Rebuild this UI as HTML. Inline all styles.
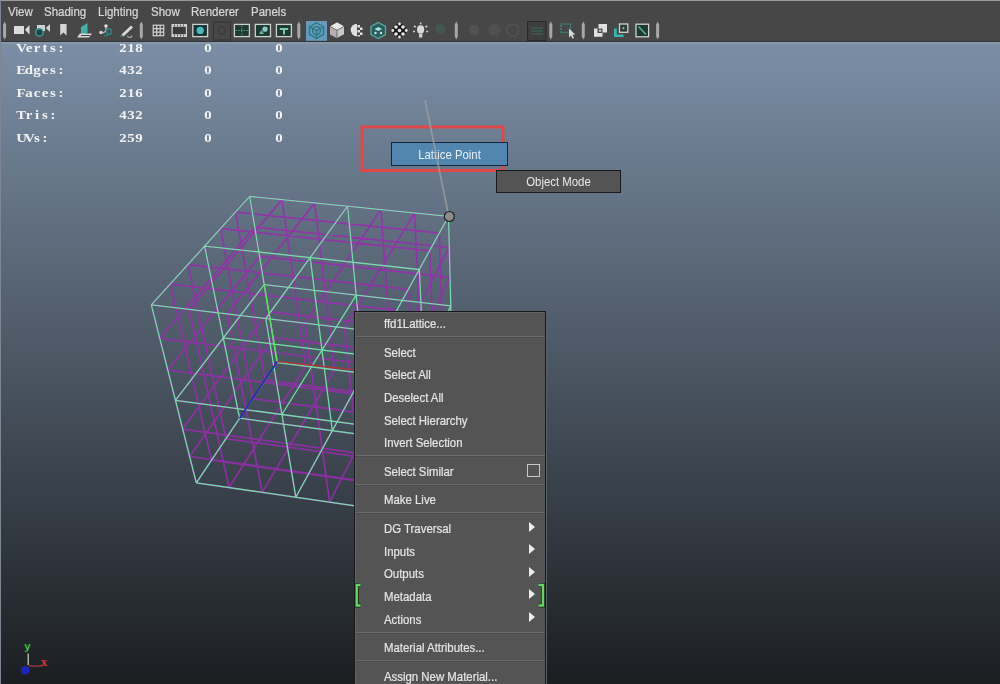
<!DOCTYPE html>
<html><head><meta charset="utf-8">
<style>
*{margin:0;padding:0;box-sizing:border-box}
html,body{width:1000px;height:684px;overflow:hidden;background:#444}
body{position:relative;font-family:"Liberation Sans",sans-serif}
#topbar{position:absolute;left:0;top:0;width:1000px;height:42px;background:#464746;border-top:1px solid #9a9a9a;border-bottom:1px solid #30363a}
#leftline{position:absolute;left:0;top:0;width:1px;height:684px;background:#7e8694;z-index:5}
#menus{position:absolute;top:5px;left:0;height:14px;color:#d8d8d8;-webkit-text-stroke:0.2px #d8d8d8;font-size:11.5px;z-index:4;line-height:14px}
#menus span{position:absolute;top:0;white-space:nowrap;transform:scaleY(1.16);transform-origin:0 11px}
#vp{position:absolute;left:1px;top:42px;width:999px;height:642px;border-top:2px solid #8898a8;
 background:linear-gradient(to bottom,#7b8ea5 0px,#1b1e21 641px)}
#stats{position:absolute;left:0;top:0;font-family:"Liberation Serif",serif;font-weight:bold;font-size:12.6px;color:#f2f2f2;line-height:14px}
#stats span{position:absolute;width:8px;text-align:center;white-space:nowrap;transform:scaleX(1.18)}
svg{position:absolute;left:0;top:0}
.menu{position:absolute;left:354px;top:311px;width:192px;height:380px;background:#545454;border:1px solid #16181c;box-shadow:inset 1px 1px 0 #646464,1px 0 0 #586068}
.mi{position:absolute;left:29px;color:#e4e4e4;-webkit-text-stroke:0.2px #e4e4e4;font-size:11.4px;white-space:nowrap;line-height:13px;transform:scaleY(1.14);transform-origin:0 11px}
.sep{position:absolute;left:0;width:190px;height:2px;background:#6c6c6c;border-bottom:1px solid #4c4c4c}
.arr{position:absolute;left:173.5px;width:0;height:0;border-top:5.5px solid transparent;border-bottom:5.5px solid transparent;border-left:6px solid #ececec}
</style></head><body>
<div id="vp"></div>
<svg width="1000" height="684" viewBox="0 0 1000 684">
<defs><filter id="bl" x="-5%" y="-5%" width="110%" height="110%"><feGaussianBlur stdDeviation="0.5"/></filter>
<filter id="bm" x="-5%" y="-5%" width="110%" height="110%"><feGaussianBlur stdDeviation="0.6"/></filter></defs>
<g filter="url(#bm)"><path d="M277.0 362.5L249.7 196.4M277.0 362.5L196.3 482.8M277.0 362.5L452.8 384.6M277.0 362.5L196.3 482.8M277.0 362.5L452.8 384.6M277.0 362.5L249.7 196.4M265.1 380.2L235.5 212.1M272.9 337.6L189.7 456.5M265.1 380.2L444.8 403.3M305.7 366.1L229.1 487.5M272.9 337.6L452.2 359.4M305.7 366.1L282.0 199.6M252.7 398.7L220.5 228.6M268.6 311.6L182.7 429.1M252.7 398.7L436.4 422.9M334.6 369.7L262.3 492.4M268.6 311.6L451.5 333.2M334.6 369.7L314.6 202.9M239.6 418.2L204.6 246.1M264.2 284.6L175.4 400.3M239.6 418.2L427.6 443.5M363.7 373.4L295.8 497.2M264.2 284.6L450.8 305.8M363.7 373.4L347.6 206.2M225.9 438.6L187.9 264.6M259.6 256.4L167.8 370.0M225.9 438.6L418.4 465.2M393.2 377.1L329.6 502.2M259.6 256.4L450.1 277.3M393.2 377.1L380.9 209.6M211.5 460.1L170.2 284.1M254.7 227.1L159.8 338.3M211.5 460.1L408.7 488.1M422.9 380.8L363.8 507.2M254.7 227.1L449.3 247.5M422.9 380.8L414.5 213.0M196.3 482.8L151.3 304.9M249.7 196.4L151.3 304.9M196.3 482.8L398.4 512.2M452.8 384.6L398.4 512.2M249.7 196.4L448.5 216.4M452.8 384.6L448.5 216.4M452.8 384.6L448.5 216.4M452.8 384.6L398.4 512.2M249.7 196.4L448.5 216.4M249.7 196.4L151.3 304.9M196.3 482.8L398.4 512.2M196.3 482.8L151.3 304.9M444.8 403.3L439.3 233.1M452.2 359.4L396.3 485.8M235.5 212.1L439.3 233.1M282.0 199.6L189.1 309.4M189.7 456.5L396.3 485.8M229.1 487.5L189.1 309.4M436.4 422.9L429.6 250.8M451.5 333.2L394.2 458.2M220.5 228.6L429.6 250.8M314.6 202.9L227.2 313.9M182.7 429.1L394.2 458.2M262.3 492.4L227.2 313.9M427.6 443.5L419.3 269.5M450.8 305.8L391.9 429.1M204.6 246.1L419.3 269.5M347.6 206.2L265.8 318.5M175.4 400.3L391.9 429.1M295.8 497.2L265.8 318.5M418.4 465.2L408.4 289.3M450.1 277.3L389.6 398.6M187.9 264.6L408.4 289.3M380.9 209.6L304.9 323.2M167.8 370.0L389.6 398.6M329.6 502.2L304.9 323.2M408.7 488.1L396.8 310.3M449.3 247.5L387.1 366.5M170.2 284.1L396.8 310.3M414.5 213.0L344.4 327.9M159.8 338.3L387.1 366.5M363.8 507.2L344.4 327.9M398.4 512.2L384.5 332.6M448.5 216.4L384.5 332.6M151.3 304.9L384.5 332.6M448.5 216.4L384.5 332.6M151.3 304.9L384.5 332.6M398.4 512.2L384.5 332.6" stroke="#9a2cb0" stroke-width="1.7" fill="none" opacity="0.85"/></g>
<g filter="url(#bl)">
<path d="M277.0 362.5L452.8 384.6M277.0 362.5L249.7 196.4M277.0 362.5L196.3 482.8M239.6 418.2L427.6 443.5M239.6 418.2L204.6 246.1M264.2 284.6L175.4 400.3M196.3 482.8L398.4 512.2M196.3 482.8L151.3 304.9M249.7 196.4L151.3 304.9M264.2 284.6L450.8 305.8M363.7 373.4L347.6 206.2M363.7 373.4L295.8 497.2M223.3 337.9L423.7 362.5M332.3 430.7L310.2 257.6M356.2 295.1L281.9 414.5M175.4 400.3L391.9 429.1M295.8 497.2L265.8 318.5M347.6 206.2L265.8 318.5M249.7 196.4L448.5 216.4M452.8 384.6L448.5 216.4M452.8 384.6L398.4 512.2M204.6 246.1L419.3 269.5M427.6 443.5L419.3 269.5M450.8 305.8L391.9 429.1M151.3 304.9L384.5 332.6M398.4 512.2L384.5 332.6M448.5 216.4L384.5 332.6" stroke="#72dea4" stroke-width="1.3" fill="none"/>
<path d="M277.3 361.5L264.2 284.6" stroke="#58e058" stroke-width="1.4"/>
<path d="M277.3 361.5L354 369.8" stroke="#a83838" stroke-width="1.5"/>
<path d="M277.3 361.5L239.6 418.2" stroke="#1c28b0" stroke-width="1.6"/>
</g>
<rect x="362" y="127" width="141" height="43.5" fill="none" stroke="#e04848" stroke-width="3"/>
<!-- gizmo -->
<path d="M28.2 653.5V665" stroke="#c8d8c8" stroke-width="1.2"/>
<path d="M28.5 665.5Q36 667 43 665.5" stroke="#8a3a3a" stroke-width="1.5" fill="none"/>
<circle cx="25.2" cy="670.2" r="4.2" fill="#1c24c0"/>
<text x="24.2" y="649.5" font-family="Liberation Sans" font-weight="bold" font-size="11.5" fill="#58e058" stroke="#0a300a" stroke-width="0.3">y</text>
<text x="41" y="666" font-family="Liberation Serif" font-weight="bold" font-size="12" fill="#e03434">x</text>
</svg>
<div id="topbar"></div>
<svg width="1000" height="42" viewBox="0 0 1000 42" style="position:absolute;left:0;top:0;z-index:3">

<path transform="translate(2.8 21.5)" d="M1.8 0L3.3 3L3.3 15L1.8 18L0.3 15L0.3 3Z" fill="#a8a8a8"/>
<path transform="translate(139.5 21.5)" d="M1.8 0L3.3 3L3.3 15L1.8 18L0.3 15L0.3 3Z" fill="#a8a8a8"/>
<path transform="translate(297.0 21.5)" d="M1.8 0L3.3 3L3.3 15L1.8 18L0.3 15L0.3 3Z" fill="#a8a8a8"/>
<path transform="translate(454.5 21.5)" d="M1.8 0L3.3 3L3.3 15L1.8 18L0.3 15L0.3 3Z" fill="#a8a8a8"/>
<path transform="translate(549.0 21.5)" d="M1.8 0L3.3 3L3.3 15L1.8 18L0.3 15L0.3 3Z" fill="#a8a8a8"/>
<path transform="translate(581.5 21.5)" d="M1.8 0L3.3 3L3.3 15L1.8 18L0.3 15L0.3 3Z" fill="#a8a8a8"/>
<path transform="translate(655.8 21.5)" d="M1.8 0L3.3 3L3.3 15L1.8 18L0.3 15L0.3 3Z" fill="#a8a8a8"/>
<!-- camera -->
<rect x="14" y="26" width="10" height="8" fill="#dcdcdc"/>
<path d="M25 29.7L29.5 25L29.5 34.5Z" fill="#dcdcdc"/>
<!-- camera 2 -->
<rect x="37" y="25" width="8" height="6" fill="#d0d0d0"/>
<path d="M45.8 28L50 24L50 32Z" fill="#d0d0d0"/>
<circle cx="39.4" cy="32.4" r="3.7" fill="#1d4444" stroke="#3f9c9c" stroke-width="1.5"/>
<!-- bookmark -->
<path d="M60.2 24H66.6V35.5L63.4 32.5L60.2 35.5Z" fill="#d4d4d4"/>
<!-- plane/book -->
<path d="M81 27L87.5 23V33L81 35Z" fill="#3fb0a8"/>
<path d="M77 37.5L80 33.5H92L89 37.5Z" fill="#d8d8d8"/>
<path d="M81 35.5H90" stroke="#444" stroke-width="1"/>
<!-- pivot -->
<circle cx="106" cy="26" r="1.8" fill="#dcdcdc"/>
<circle cx="101" cy="32.5" r="1.8" fill="#e0d0d0"/>
<path d="M106 27V31L103 33" stroke="#ccc" stroke-width="1.2" fill="none"/>
<circle cx="109" cy="31.5" r="2.6" fill="none" stroke="#2e8078" stroke-width="1.6"/>
<path d="M104 36L111 34" stroke="#2e8078" stroke-width="1.6"/>
<!-- pencil -->
<path d="M121.5 34.5L131 25.5L133 27.5L123.5 36.5Z" fill="#d8d8d8"/>
<path d="M120 37L121.5 34.5L123.5 36.5Z" fill="#3a8a80"/>
<path d="M127 36Q131 39 132 35.5" stroke="#9a9a9a" stroke-width="1.5" fill="none"/>
<!-- grid -->
<g stroke="#d0d0d0" stroke-width="1.2" fill="none">
<rect x="153.2" y="25.2" width="10.5" height="10.5"/>
<path d="M156.7 25V36M160.2 25V36M153 28.7H164M153 32.2H164"/>
</g>
<!-- film -->
<rect x="171.5" y="24" width="15.5" height="13" fill="#d0d0d0"/>
<rect x="172.8" y="26.8" width="13" height="7.4" fill="#3a3a3a"/>
<path d="M174.5 24.5V26.3M177.5 24.5V26.3M180.5 24.5V26.3M183.5 24.5V26.3M174.5 34.7V36.5M177.5 34.7V36.5M180.5 34.7V36.5M183.5 34.7V36.5" stroke="#555" stroke-width="1"/>
<!-- box teal circle -->
<rect x="192.8" y="24.4" width="14.8" height="12.2" fill="#1a3535" stroke="#d0d0d0" stroke-width="1.3"/>
<circle cx="200.2" cy="30.4" r="3.6" fill="#4cb8c0"/>
<!-- pressed button -->
<rect x="213.5" y="22" width="17" height="18" fill="#474747" stroke="#333" stroke-width="1"/>
<circle cx="221.8" cy="30.5" r="3.6" fill="none" stroke="#3c3c3c" stroke-width="1.5"/>
<!-- box1 -->
<rect x="234.4" y="24.4" width="15" height="12.2" fill="#1c3a30" stroke="#cfcfcf" stroke-width="1.3"/>
<path d="M241.9 25.5V35.5M235.5 30.5H248.5" stroke="#5a9a8a" stroke-width="1" stroke-dasharray="1.5 1.2"/>
<!-- box2 -->
<rect x="255.3" y="24.4" width="15.2" height="12.2" fill="#1c3a30" stroke="#cfcfcf" stroke-width="1.3"/>
<path d="M259 34L261.5 30L264 34Z" fill="#6ab0a0"/>
<circle cx="265" cy="29.2" r="2.6" fill="#8ac8c8"/>
<!-- box3 -->
<rect x="276.4" y="24.4" width="15" height="12.2" fill="#1c3a30" stroke="#cfcfcf" stroke-width="1.3"/>
<path d="M279.8 28H288.2V30H285V34.5H283V30H279.8Z" fill="#7ac8b8"/>
<!-- blue button -->
<rect x="306" y="21" width="21" height="19.8" fill="#6898bb"/>
<g fill="none" stroke="#237a80" stroke-width="1.3">
<path d="M316.5 22.8L323.5 26.8V34.4L316.5 38.4L309.5 34.4V26.8Z"/>
<path d="M316.5 30.6L323.5 26.8M316.5 30.6L309.5 26.8M316.5 30.6V38.4"/>
<circle cx="316.5" cy="30.6" r="4"/>
</g>
<!-- shaded cube -->
<path d="M337 22.5L344 26.4V34.2L337 38L330 34.2V26.4Z" fill="#c8c8c8"/>
<path d="M337 22.5L344 26.4L337 30.3L330 26.4Z" fill="#e8e8e8"/>
<path d="M337 30.3V38L330 34.2V26.4Z" fill="#b8b0b0"/>
<path d="M337 30.3V38M337 30.3L344 26.4M337 30.3L330 26.4" stroke="#555" stroke-width="0.8"/>
<!-- half sphere -->
<path d="M357 23.7A6.3 6.3 0 0 0 357 36.3Z" fill="#e0e0e0"/>
<rect x="357.5" y="25" width="2.5" height="2.5" fill="#e0e0e0"/><rect x="360" y="27.5" width="2.5" height="2.5" fill="#e0e0e0"/><rect x="357.5" y="30" width="2.5" height="2.5" fill="#e0e0e0"/><rect x="360" y="32.5" width="2.5" height="2.5" fill="#e0e0e0"/>
<rect x="357.5" y="35" width="2.5" height="1.5" fill="#e0e0e0"/>
<!-- teal cube -->
<path d="M378.3 22.5L385.5 26.5V34.5L378.3 38.5L371 34.5V26.5Z" fill="#2c5c5a" stroke="#5aa8a4" stroke-width="1.3"/>
<path d="M378.3 27L382 29L378.3 31L374.5 29Z" fill="#a0e8e0"/>
<circle cx="375.5" cy="33" r="1.2" fill="#b0f0e8"/><circle cx="381" cy="33" r="1.2" fill="#b0f0e8"/>
<!-- checker sphere -->
<circle cx="399.4" cy="30.4" r="6.8" fill="#1a1a1a"/>
<g fill="#e8e8e8">
<circle cx="396" cy="27" r="1.8"/><circle cx="403" cy="27" r="1.8"/><circle cx="399.5" cy="30.5" r="1.8"/><circle cx="396" cy="34" r="1.8"/><circle cx="403" cy="34" r="1.8"/>
<circle cx="392.8" cy="30.5" r="1.4"/><circle cx="406.2" cy="30.5" r="1.4"/><circle cx="399.5" cy="24" r="1.4"/><circle cx="399.5" cy="37" r="1.4"/>
</g>
<!-- bulb -->
<ellipse cx="420.6" cy="29.5" rx="3.6" ry="4.2" fill="#d8d8d8"/>
<rect x="419" y="34" width="3.4" height="3.5" fill="#d0d0d0"/>
<g stroke="#cfcfcf" stroke-width="1.6">
<path d="M420.6 22.5V24.2M414 26L415.8 27.2M427.2 26L425.4 27.2M413 31.5H415M426.2 31.5H428.2"/>
</g>
<!-- dim green circle -->
<circle cx="440.5" cy="29" r="5" fill="#435650"/>
<!-- disabled -->
<circle cx="474" cy="30" r="5" fill="#525252"/>
<circle cx="494.5" cy="30" r="6" fill="#505050"/>
<circle cx="512.7" cy="30" r="6" fill="none" stroke="#545454" stroke-width="1.5"/>
<!-- pressed 2 -->
<rect x="527.5" y="21.5" width="18.5" height="19" fill="#3e3e3e" stroke="#2a2a2a" stroke-width="1"/>
<path d="M531 28H543M531 31H543M531 34H543" stroke="#3d6a5a" stroke-width="1"/>
<!-- select -->
<rect x="561" y="24" width="9.5" height="8.5" fill="none" stroke="#3a8a7a" stroke-width="1.4" stroke-dasharray="2 1"/>
<path d="M569 28.5L575.2 34.5L572.5 34.8L574 38L572.3 38.6L571 35.6L569 37.5Z" fill="#d8d8d8"/>
<!-- overlap squares -->
<path d="M598.5 24H607V32.5H602.5V36.8H594V28.5H598.5Z" fill="#e0e0e0"/>
<rect x="597.5" y="28.5" width="5" height="4.5" fill="#444"/>
<rect x="598.8" y="29.6" width="2.5" height="2.2" fill="#c8c8c8"/>
<!-- teal L + square -->
<path d="M614 28.5V37H623.5V34.5H616.8V28.5Z" fill="#3ab4b0"/>
<rect x="619.5" y="24" width="8.3" height="8.3" fill="#2e3a3a" stroke="#d0d0d0" stroke-width="1.3"/>
<circle cx="623.5" cy="28.2" r="1" fill="#9ad0c8"/>
<!-- box diagonal -->
<rect x="636" y="24.2" width="12.6" height="12.6" fill="#1c3a30" stroke="#d0d0d0" stroke-width="1.3"/>
<path d="M638.5 26.5L646 34.5" stroke="#5ab0a0" stroke-width="1.6"/>
</svg>

<div id="leftline"></div>
<div id="menus">
<span style="left:8px">View</span>
<span style="left:44px">Shading</span>
<span style="left:98px">Lighting</span>
<span style="left:151px">Show</span>
<span style="left:191px">Renderer</span>
<span style="left:251px">Panels</span>
</div>
<div id="stats"><span style="left:17.0px;top:40.8px">V</span><span style="left:24.9px;top:40.8px">e</span><span style="left:32.8px;top:40.8px">r</span><span style="left:40.7px;top:40.8px">t</span><span style="left:48.6px;top:40.8px">s</span><span style="left:56.5px;top:40.8px">:</span><span style="left:118.7px;top:40.8px">2</span><span style="left:126.6px;top:40.8px">1</span><span style="left:134.5px;top:40.8px">8</span><span style="left:204px;top:40.8px">0</span><span style="left:275px;top:40.8px">0</span><span style="left:17.0px;top:63.3px">E</span><span style="left:24.9px;top:63.3px">d</span><span style="left:32.8px;top:63.3px">g</span><span style="left:40.7px;top:63.3px">e</span><span style="left:48.6px;top:63.3px">s</span><span style="left:56.5px;top:63.3px">:</span><span style="left:118.7px;top:63.3px">4</span><span style="left:126.6px;top:63.3px">3</span><span style="left:134.5px;top:63.3px">2</span><span style="left:204px;top:63.3px">0</span><span style="left:275px;top:63.3px">0</span><span style="left:17.0px;top:85.8px">F</span><span style="left:24.9px;top:85.8px">a</span><span style="left:32.8px;top:85.8px">c</span><span style="left:40.7px;top:85.8px">e</span><span style="left:48.6px;top:85.8px">s</span><span style="left:56.5px;top:85.8px">:</span><span style="left:118.7px;top:85.8px">2</span><span style="left:126.6px;top:85.8px">1</span><span style="left:134.5px;top:85.8px">6</span><span style="left:204px;top:85.8px">0</span><span style="left:275px;top:85.8px">0</span><span style="left:17.0px;top:108.3px">T</span><span style="left:24.9px;top:108.3px">r</span><span style="left:32.8px;top:108.3px">i</span><span style="left:40.7px;top:108.3px">s</span><span style="left:48.6px;top:108.3px">:</span><span style="left:118.7px;top:108.3px">4</span><span style="left:126.6px;top:108.3px">3</span><span style="left:134.5px;top:108.3px">2</span><span style="left:204px;top:108.3px">0</span><span style="left:275px;top:108.3px">0</span><span style="left:17.0px;top:130.8px">U</span><span style="left:24.9px;top:130.8px">V</span><span style="left:32.8px;top:130.8px">s</span><span style="left:40.7px;top:130.8px">:</span><span style="left:118.7px;top:130.8px">2</span><span style="left:126.6px;top:130.8px">5</span><span style="left:134.5px;top:130.8px">9</span><span style="left:204px;top:130.8px">0</span><span style="left:275px;top:130.8px">0</span></div>

<div style="position:absolute;left:391px;top:142px;width:117px;height:24px;background:#5186b0;border:1px solid #18243a;color:#e8eef2;font-size:11.4px;text-align:center;line-height:22px"><div style="transform:scaleY(1.14)">Lattice Point</div></div>
<div style="position:absolute;left:496px;top:170px;width:125px;height:23px;background:#545454;border:1px solid #1a1a1a;color:#e8e8e8;font-size:11.4px;text-align:center;line-height:23px"><div style="transform:scaleY(1.14)">Object Mode</div></div>
<svg width="1000" height="684" viewBox="0 0 1000 684"><path d="M425 100L448.5 215" stroke="#9c9ea0" stroke-width="1.7" opacity="0.8"/><circle cx="449.3" cy="216.5" r="5" fill="#8c8c8c" stroke="#202020" stroke-width="1.2"/></svg>
<div class="menu">
<div class="mi" style="top:6px">ffd1Lattice...</div>
<div class="sep" style="top:24px"></div>
<div class="mi" style="top:35px">Select</div>
<div class="mi" style="top:57px">Select All</div>
<div class="mi" style="top:80px">Deselect All</div>
<div class="mi" style="top:103px">Select Hierarchy</div>
<div class="mi" style="top:125px">Invert Selection</div>
<div class="sep" style="top:143px"></div>
<div class="mi" style="top:154px">Select Similar</div>
<div style="position:absolute;left:172px;top:152px;width:13px;height:13px;border:1px solid #c8c8c8"></div>
<div class="sep" style="top:172px"></div>
<div class="mi" style="top:182px">Make Live</div>
<div class="sep" style="top:200px"></div>
<div class="mi" style="top:211px">DG Traversal</div><div class="arr" style="top:209.5px"></div>
<div class="mi" style="top:234px">Inputs</div><div class="arr" style="top:232px"></div>
<div class="mi" style="top:256px">Outputs</div><div class="arr" style="top:254.5px"></div>
<div class="mi" style="top:279px">Metadata</div><div class="arr" style="top:277px"></div>
<div class="mi" style="top:302px">Actions</div><div class="arr" style="top:299.5px"></div>
<div class="sep" style="top:320px"></div>
<div class="mi" style="top:330px">Material Attributes...</div>
<div class="sep" style="top:348px"></div>
<div class="mi" style="top:359px">Assign New Material...</div>
</div>
<svg width="1000" height="684" viewBox="0 0 1000 684" style="z-index:6">
<path d="M360.5 585H356.7V605.5H360.5M538.5 585H543V605.5H538.5" stroke="#0c200c" stroke-width="4.2" fill="none" opacity="0.8"/>
<path d="M360.5 585H356.7V605.5H360.5M538.5 585H543V605.5H538.5" stroke="#66d466" stroke-width="2.4" fill="none"/>
</svg>
</body></html>
